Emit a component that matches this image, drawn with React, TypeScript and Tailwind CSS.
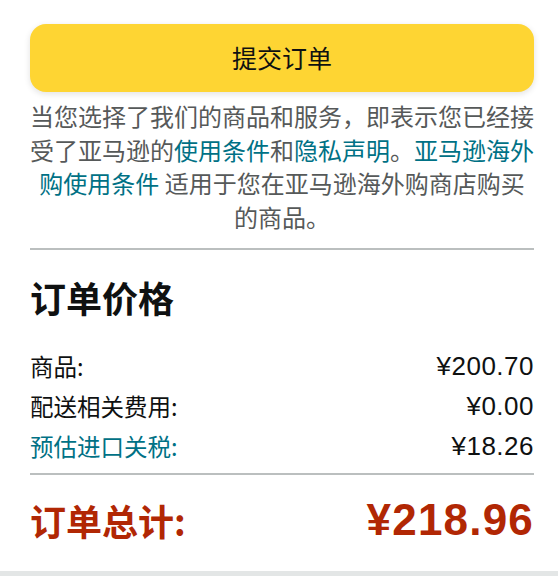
import React from 'react';

const cjk = { fontFamily: '"Noto Sans CJK SC", "Liberation Sans", sans-serif' };
const latin = { fontFamily: '"Liberation Sans", Arial, sans-serif' };

export default function App() {
  return (
    <div className="w-[558px] bg-white text-[#0f1111]" style={cjk}>
      <div className="pl-[30px] pr-[24px] pt-[24px]">
        {/* Place order */}
        <button className="w-full h-[68px] rounded-[16px] bg-[#fed533] shadow-[0_2px_6px_rgba(15,17,17,0.12)] text-[25px] text-[#0f1111]">
          提交订单
        </button>

        <p className="mt-[7px] text-center text-[24px] leading-[33.6px] text-[#565959]">
          当您选择了我们的商品和服务，即表示您已经接受了亚马逊的
          <span className="text-[#007185]">使用条件</span>和
          <span className="text-[#007185]">隐私声明</span>。
          <span className="text-[#007185]">亚马逊海外购使用条件</span> 适用于您在亚马逊海外购商店购买的商品。
        </p>

        <div className="mt-[15px] h-[2px] bg-[#bbbfbf]" />

        {/* Order summary */}
        <h2 className="mt-[24px] text-[36px] leading-[47px] font-bold">订单价格</h2>

        <div className="mt-[25px] text-[23.5px]">
          <div className="flex items-center justify-between h-[40px]">
            <span>商品:</span>
            <span className="text-[26px] tracking-[0.5px]" style={latin}>¥200.70</span>
          </div>
          <div className="flex items-center justify-between h-[40px]">
            <span>配送相关费用:</span>
            <span className="text-[26px] tracking-[0.5px]" style={latin}>¥0.00</span>
          </div>
          <div className="flex items-center justify-between h-[40px]">
            <span className="text-[#007185]">预估进口关税:</span>
            <span className="text-[26px] tracking-[0.5px]" style={latin}>¥18.26</span>
          </div>
        </div>

        <div className="mt-[7px] h-[2px] bg-[#bbbfbf]" />

        <div className="mt-[20px] flex items-center justify-between h-[50px] text-[#b12704] font-bold">
          <span className="text-[36px]">订单总计:</span>
          <span className="text-[44px] tracking-[1.2px]" style={latin}>¥218.96</span>
        </div>
      </div>

      <div className="mt-[26px] h-[12px] bg-[#e3e6e6]" />
    </div>
  );
}
